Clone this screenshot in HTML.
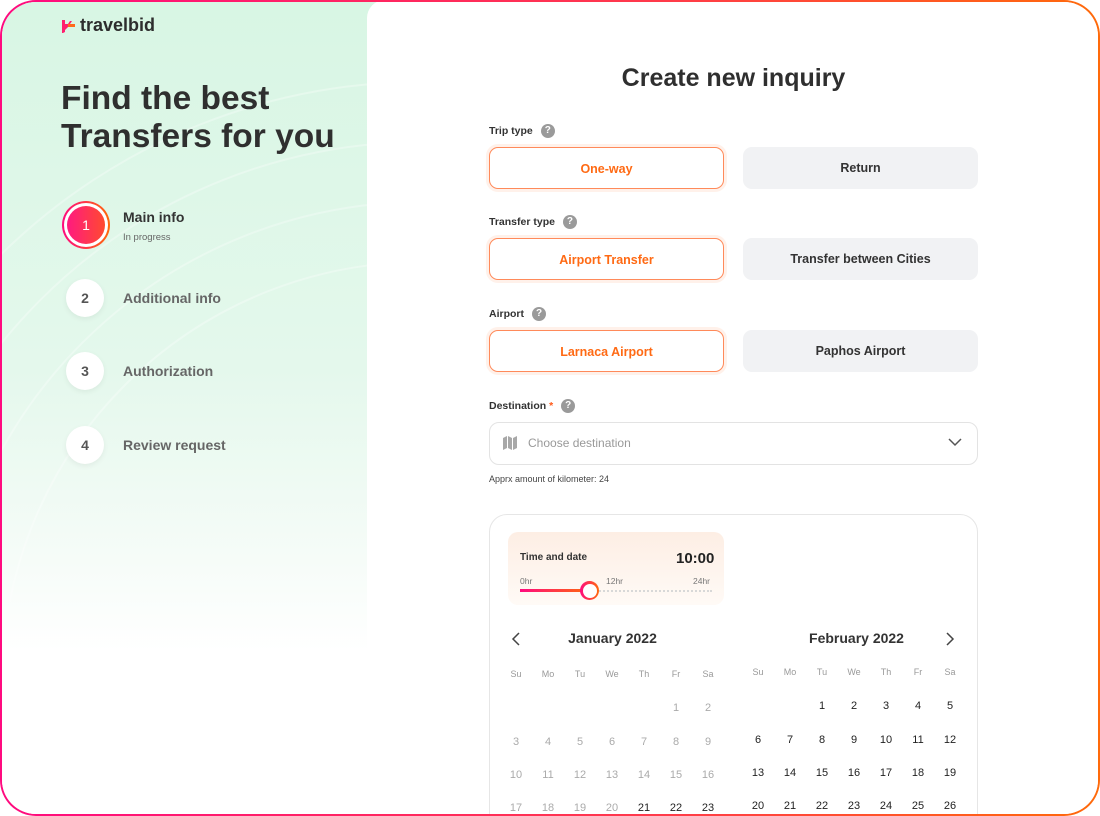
<!DOCTYPE html>
<html style="width:1100px;height:816px;overflow:hidden"><head><meta charset="utf-8"><style>
*{box-sizing:border-box;margin:0;padding:0}
body{width:1100px;height:816px;background:#fff;font-family:"Liberation Sans",sans-serif;position:relative;overflow:hidden;color:#2b2b2b}
.frame{position:absolute;left:0;top:0;width:1100px;height:816px;border-radius:36px;background:linear-gradient(90deg,#ff0a7f,#ff3a4a 60%,#ff6a0a);padding:2px}
.inner{position:relative;width:100%;height:100%;border-radius:34px;background:#fff;overflow:hidden}
.left{position:absolute;left:0;top:0;width:380px;height:812px;background:linear-gradient(180deg,#d8f6e4 0%,#e4f8ec 45%,#f3fbf6 65%,#fff 80%)}
.right{position:absolute;left:365px;top:-2px;width:740px;height:820px;background:#fff;border-top-left-radius:18px}
.abs{position:absolute}
.logo{left:58px;top:15px;font-weight:bold;font-size:18px;color:#2d2d2d}
.h1{left:61px;top:80px;font-size:33.5px;font-weight:bold;line-height:38px;color:#2f2f2f}
.step{position:absolute;left:66px;width:38px;height:38px;border-radius:50%;background:#fff;box-shadow:0 2px 6px rgba(0,0,0,.06);text-align:center;line-height:38px;font-size:14px;font-weight:bold;color:#555}
.slabel{position:absolute;left:123px;font-size:14px;font-weight:bold;color:#666}
.lbl{position:absolute;left:489px;font-size:10.5px;font-weight:bold;color:#333}
.q{display:inline-block;width:14px;height:14px;border-radius:50%;background:#9a9a9a;color:#fff;font-size:10px;text-align:center;line-height:14px;margin-left:8px;vertical-align:middle}
.btn{position:absolute;width:235px;height:42px;border-radius:9px;text-align:center;line-height:42px;font-size:12.5px;font-weight:bold}
.on{left:489px;border:1.5px solid #ff8a5a;color:#ff6a14;background:#fff;box-shadow:0 0 0 3px #fff1ea}
.off{left:743px;background:#f1f2f4;color:#333}
.cal{position:absolute;left:487px;top:512px;width:489px;height:320px;border:1px solid #e6e6e6;border-radius:18px;background:#fff}
.d{position:absolute;width:30px;text-align:center;font-size:11px}
.g{color:#aaa}.k{color:#222}
.wd{color:#999;font-size:9px}
</style></head><body>
<div class="frame"><div class="inner">
<div class="left"></div>
<svg class="abs" style="left:0;top:0" width="380" height="600"><g fill="none" stroke="#fff" stroke-opacity=".3" stroke-width="2"><circle cx="420" cy="680" r="420"/><circle cx="420" cy="680" r="480"/><circle cx="420" cy="680" r="540"/><circle cx="420" cy="680" r="600"/></g></svg>
<div class="right"></div>
<div class="cal"></div>
</div></div>

<svg class="abs" style="left:60px;top:19px" width="16" height="16" viewBox="0 0 16 16"><path d="M2 1h3v4h3l2-3h2l-2 3h4v3H8l-3 3v2l-2 1H2z" fill="#ff1f6e"/><path d="M8 5h7v3H8z" fill="#ff6a1a"/></svg>
<div class="abs logo" style="left:80px">travelbid</div>
<div class="abs h1">Find the best<br>Transfers for you</div>

<div class="abs" style="left:62px;top:201px;width:48px;height:48px;border-radius:50%;background:linear-gradient(90deg,#ff0a7f,#ff6a0a);padding:2px"><div style="width:100%;height:100%;border-radius:50%;background:#fff;padding:3px"><div style="width:100%;height:100%;border-radius:50%;background:linear-gradient(90deg,#ff1a80,#ff4a30);color:#fff;text-align:center;line-height:38px;font-size:14px">1</div></div></div>
<div class="slabel" style="top:209px;color:#333">Main info</div>
<div class="abs" style="left:123px;top:232px;font-size:9.5px;color:#666">In progress</div>
<div class="step" style="top:279px">2</div><div class="slabel" style="top:290px">Additional info</div>
<div class="step" style="top:352px">3</div><div class="slabel" style="top:363px">Authorization</div>
<div class="step" style="top:426px">4</div><div class="slabel" style="top:437px">Review request</div>

<div class="abs" style="left:489px;width:489px;top:64px;text-align:center;font-size:25px;font-weight:bold;color:#2f2f2f">Create new inquiry</div>

<div class="lbl" style="top:124px">Trip type<span class="q">?</span></div>
<div class="btn on" style="top:147px">One-way</div><div class="btn off" style="top:147px">Return</div>
<div class="lbl" style="top:215px">Transfer type<span class="q">?</span></div>
<div class="btn on" style="top:238px">Airport Transfer</div><div class="btn off" style="top:238px">Transfer between Cities</div>
<div class="lbl" style="top:307px">Airport<span class="q">?</span></div>
<div class="btn on" style="top:330px">Larnaca Airport</div><div class="btn off" style="top:330px">Paphos Airport</div>
<div class="lbl" style="top:399px">Destination <span style="color:#ff5a1a">*</span><span class="q">?</span></div>
<div class="abs" style="left:489px;top:422px;width:489px;height:43px;border:1px solid #e3e3e3;border-radius:10px"></div>
<svg class="abs" style="left:502px;top:435px" width="16" height="16" viewBox="0 0 16 16"><path d="M1 3l4-2v12l-4 2zM6 1l4 2v12l-4-2zM11 3l4-2v12l-4 2z" fill="#a8a8a8"/></svg>
<div class="abs" style="left:528px;top:436px;font-size:12px;color:#999">Choose destination</div>
<svg class="abs" style="left:948px;top:437px" width="14" height="10" viewBox="0 0 14 10"><path d="M1 2l6 6 6-6" fill="none" stroke="#555" stroke-width="1.5"/></svg>
<div class="abs" style="left:489px;top:474px;font-size:9px;color:#444">Apprx amount of kilometer: 24</div>

<div class="abs" style="left:508px;top:532px;width:216px;height:73px;border-radius:10px;background:linear-gradient(180deg,#fdeee4,#fffaf6)"></div>
<div class="abs" style="left:520px;top:552px;font-size:10px;font-weight:bold;color:#333">Time and date</div>
<div class="abs" style="left:676px;top:550px;font-size:15px;font-weight:bold;color:#222">10:00</div>
<div class="abs" style="left:520px;top:576px;font-size:8.5px;color:#777">0hr</div>
<div class="abs" style="left:606px;top:576px;font-size:8.5px;color:#777">12hr</div>
<div class="abs" style="left:693px;top:576px;font-size:8.5px;color:#777">24hr</div>
<div class="abs" style="left:520px;top:590px;width:192px;border-top:2px dotted #d8d8d8"></div>
<div class="abs" style="left:520px;top:589px;width:70px;height:3px;background:linear-gradient(90deg,#ff0a7f,#ff6a0a)"></div>
<div class="abs" style="left:580px;top:581px;width:19px;height:19px;border-radius:50%;background:linear-gradient(90deg,#ff0a7f,#ff6a0a);padding:2.5px"><div style="width:100%;height:100%;border-radius:50%;background:#fff"></div></div>

<svg class="abs" style="left:511px;top:632px" width="10" height="14" viewBox="0 0 10 14"><path d="M8 1L2 7l6 6" fill="none" stroke="#444" stroke-width="1.5"/></svg>
<svg class="abs" style="left:945px;top:632px" width="10" height="14" viewBox="0 0 10 14"><path d="M2 1l6 6-6 6" fill="none" stroke="#444" stroke-width="1.5"/></svg>
<div class="abs" style="left:540px;width:145px;top:630px;text-align:center;font-size:14px;font-weight:bold;color:#333">January 2022</div>
<div class="abs" style="left:784px;width:145px;top:630px;text-align:center;font-size:14px;font-weight:bold;color:#333">February 2022</div>
<div id="c"></div>
<script>
var h='',wd=['Su','Mo','Tu','We','Th','Fr','Sa'],jx=[516,548,580,612,644,676,708],fx=[758,790,822,854,886,918,950],ry=[674,708,742,775,808];
for(var i=0;i<7;i++){h+='<div class="d wd" style="left:'+(jx[i]-15)+'px;top:669px">'+wd[i]+'</div><div class="d wd" style="left:'+(fx[i]-15)+'px;top:667px">'+wd[i]+'</div>';}
for(var n=1;n<=23;n++){var p=n+4,r=Math.floor(p/7)+1,c=p%7;h+='<div class="d '+(n>=21?'k':'g')+'" style="left:'+(jx[c]-15)+'px;top:'+(ry[r]-6)+'px">'+n+'</div>';}
for(var n=1;n<=26;n++){var p=n+1,r=Math.floor(p/7)+1,c=p%7;h+='<div class="d k" style="left:'+(fx[c]-15)+'px;top:'+(ry[r]-8)+'px">'+n+'</div>';}
document.getElementById('c').innerHTML=h;
</script>
</body></html>
